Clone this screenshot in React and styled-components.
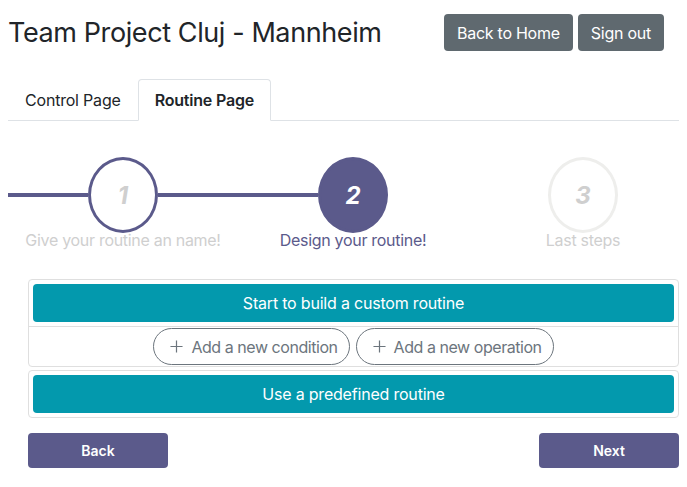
import React from "react";
import styled, { createGlobalStyle } from "styled-components";

const Global = createGlobalStyle`
  html, body { margin: 0; padding: 0; background: #fff; overflow: hidden; }
  body { font-family: Inter, "Noto Sans", sans-serif; color: #212529; }
  * { box-sizing: border-box; }
`;

const Page = styled.div`
  padding: 0 8px;
  width: 687px;
`;

const Header = styled.header`
  display: flex;
  align-items: center;
  justify-content: space-between;
  padding: 14px 15px 0 0;
  height: 51px;
`;

const Title = styled.h1`
  margin: 0;
  font-size: 27px;
  font-weight: 400;
  letter-spacing: -0.4px;
  color: #212529;
`;

const HeaderButtons = styled.div`
  display: flex;
  gap: 5px;
`;

const GreyButton = styled.button`
  font-family: inherit;
  font-size: 16px;
  color: #fff;
  background: #5f696f;
  border: none;
  border-radius: 4px;
  height: 37px;
  padding: 0 13px;
  letter-spacing: -0.25px;
`;

const Tabs = styled.nav`
  display: flex;
  margin-top: 28px;
  border-bottom: 1px solid #dee2e6;
  height: 42px;
`;

const Tab = styled.div`
  display: flex;
  align-items: center;
  padding: 0 16px;
  margin-bottom: -1px;
  font-size: 16px;
  letter-spacing: -0.2px;
  font-weight: ${(p) => (p.$active ? 600 : 400)};
  color: #212529;
  background: ${(p) => (p.$active ? "#fff" : "transparent")};
  border: 1px solid ${(p) => (p.$active ? "#dee2e6" : "transparent")};
  border-bottom-color: ${(p) => (p.$active ? "#fff" : "transparent")};
  border-radius: 4px 4px 0 0;
`;

const Stepper = styled.div`
  display: grid;
  grid-template-columns: repeat(3, 230px);
  margin-top: 36px;
`;

const Step = styled.div`
  display: flex;
  flex-direction: column;
  align-items: stretch;
`;

const StepRow = styled.div`
  display: flex;
  align-items: center;
  height: 76px;
`;

const Line = styled.div`
  flex: 1;
  height: 4px;
  background: ${(p) => (p.$on ? "#5b5a8b" : "transparent")};
`;

const Circle = styled.div`
  width: 70px;
  height: 76px;
  border-radius: 50%;
  display: flex;
  align-items: center;
  justify-content: center;
  font-size: 24px;
  font-weight: 700;
  font-style: italic;
  color: ${(p) => (p.$state === "active" ? "#fff" : "#cfcfcf")};
  background: ${(p) => (p.$state === "active" ? "#5b5a8b" : "#fff")};
  border: 3px solid
    ${(p) => (p.$state === "todo" ? "#eeeeec" : "#5b5a8b")};
`;

const StepLabel = styled.div`
  text-align: center;
  font-size: 16px;
  letter-spacing: -0.3px;
  margin-top: -3px;
  color: ${(p) => (p.$active ? "#5b5a8b" : "#cfcfcf")};
`;

const Content = styled.div`
  padding-left: 20px;
  margin-top: 29px;
`;

const Card = styled.div`
  border: 1px solid #dfdfdf;
  border-radius: 4px;
  margin-bottom: 3px;
`;

const CardBody = styled.div`
  padding: 4px;
`;

const TealButton = styled.button`
  width: 100%;
  height: 38px;
  font-family: inherit;
  font-size: 16px;
  letter-spacing: -0.2px;
  color: #fff;
  background: #0399ad;
  border: none;
  border-radius: 4px;
`;

const PillRow = styled.div`
  display: flex;
  justify-content: center;
  gap: 6px;
  padding: 1px 0;
  border-top: 1px solid #dfdfdf;
`;

const Pill = styled.button`
  display: flex;
  align-items: center;
  gap: 8px;
  height: 37px;
  padding: 0 11px 0 16px;
  font-family: inherit;
  font-size: 16px;
  letter-spacing: -0.45px;
  color: #6c757d;
  background: #fff;
  border: 1px solid #6c757d;
  border-radius: 19px;
`;

const Plus = styled.svg`
  width: 13px;
  height: 13px;
`;

const Footer = styled.div`
  display: flex;
  justify-content: space-between;
  margin-top: 15px;
`;

const NavButton = styled.button`
  width: 140px;
  height: 35px;
  font-family: inherit;
  font-size: 14px;
  font-weight: 600;
  color: #fff;
  background: #5b5a8b;
  border: none;
  border-radius: 4px;
`;

const PlusIcon = () => (
  <Plus viewBox="0 0 14 14" fill="none" stroke="currentColor" strokeWidth="1.3">
    <path d="M7 0.5v13M0.5 7h13" />
  </Plus>
);

const steps = [
  { n: 1, label: "Give your routine an name!", state: "done", left: true, right: true },
  { n: 2, label: "Design your routine!", state: "active", left: true, right: false },
  { n: 3, label: "Last steps", state: "todo", left: false, right: false },
];

export default function App() {
  return (
    <Page>
      <Global />
      <Header>
        <Title>Team Project Cluj - Mannheim</Title>
        <HeaderButtons>
          <GreyButton>Back to Home</GreyButton>
          <GreyButton>Sign out</GreyButton>
        </HeaderButtons>
      </Header>
      <Tabs>
        <Tab>Control Page</Tab>
        <Tab $active>Routine Page</Tab>
      </Tabs>
      <Stepper>
        {steps.map((s) => (
          <Step key={s.n}>
            <StepRow>
              <Line $on={s.left} />
              <Circle $state={s.state}>{s.n}</Circle>
              <Line $on={s.right} />
            </StepRow>
            <StepLabel $active={s.state === "active"}>{s.label}</StepLabel>
          </Step>
        ))}
      </Stepper>
      <Content>
        <Card>
          <CardBody>
            <TealButton>Start to build a custom routine</TealButton>
          </CardBody>
          <PillRow>
            <Pill>
              <PlusIcon />
              Add a new condition
            </Pill>
            <Pill>
              <PlusIcon />
              Add a new operation
            </Pill>
          </PillRow>
        </Card>
        <Card>
          <CardBody>
            <TealButton>Use a predefined routine</TealButton>
          </CardBody>
        </Card>
        <Footer>
          <NavButton>Back</NavButton>
          <NavButton>Next</NavButton>
        </Footer>
      </Content>
    </Page>
  );
}
